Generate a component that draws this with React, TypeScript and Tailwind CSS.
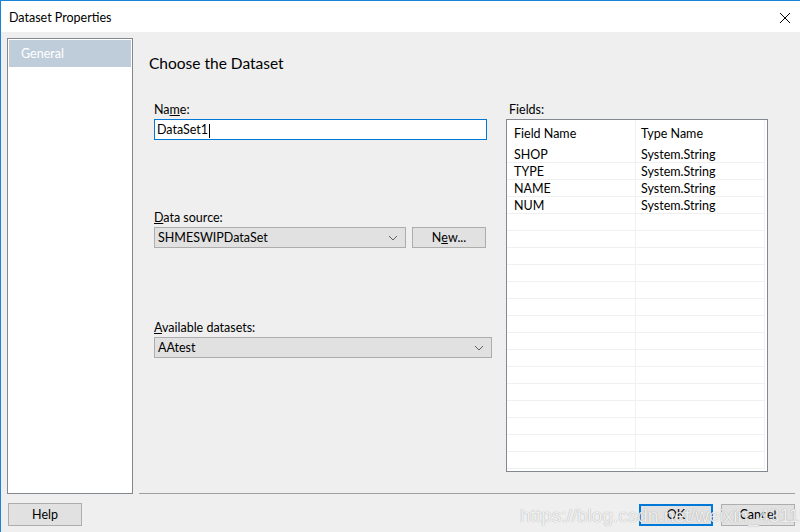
import React from "react";

const fields = [
  { name: "SHOP", type: "System.String" },
  { name: "TYPE", type: "System.String" },
  { name: "NAME", type: "System.String" },
  { name: "NUM", type: "System.String" },
];

const Chevron = () => (
  <svg width="10" height="6" viewBox="0 0 10 6" className="shrink-0">
    <path d="M1 1 L5 5 L9 1" fill="none" stroke="#606060" strokeWidth="1" />
  </svg>
);

const Combo = ({ value, width }: { value: string; width: string }) => (
  <div
    className={`${width} h-[21px] flex items-center justify-between bg-[#e1e1e1] border border-[#adadad] pl-[3px] pr-[7px]`}
  >
    <span className="pt-[2px]">{value}</span>
    <Chevron />
  </div>
);

const App = () => {
  const emptyRows = Array.from({ length: 15 });

  return (
    <div
      className="relative w-[800px] h-[532px] overflow-hidden bg-[#efefef] border-l border-t border-[#1883d7] text-[12.5px] text-black flex flex-col"
      style={{ fontFamily: 'Lato, "Noto Sans", sans-serif' }}
    >
      {/* title bar */}
      <div className="h-[31px] bg-white flex items-center justify-between pl-[8px] pr-[8px] pt-[3px] shrink-0">
        <span>Dataset Properties</span>
        <svg width="12" height="12" viewBox="0 0 12 12" className="mr-[1px]">
          <path d="M1 1 L11 11 M11 1 L1 11" stroke="#000" strokeWidth="1" />
        </svg>
      </div>

      <div className="flex-1 flex flex-col pt-[6px] pl-[6px] pr-[5px]">
        <div className="h-[456px] flex gap-[6px]">
          {/* left nav */}
          <div className="w-[126px] bg-white border border-[#828790] p-[1px]">
            <div className="h-[27px] bg-[#bfcddb] text-white flex items-center pl-[12px] pt-[2px]">
              General
            </div>
          </div>

          {/* main */}
          <div className="flex-1 border-b border-[#a0a0a0] pl-[10px] pt-[15px]">
            <div className="text-[15.5px] leading-[20px]">Choose the Dataset</div>

            <div className="flex mt-[28px]">
              <div className="w-[338px] ml-[5px] flex flex-col">
                <div className="leading-[16px] pt-[1px] mb-[1px]">
                  Na<span className="underline">m</span>e:
                </div>
                <div className="w-[333px] h-[21px] bg-white border border-[#0078d7] flex items-center pl-[2px] pt-[2px]">
                  <span>DataSet1</span>
                  <span className="w-[1px] h-[14px] bg-black ml-[1px]" />
                </div>

                <div className="leading-[16px] pt-[1px] mb-[1px] mt-[69px]">
                  <span className="underline">D</span>ata source:
                </div>
                <div className="flex gap-[6px]">
                  <Combo value="SHMESWIPDataSet" width="w-[252px]" />
                  <div className="w-[74px] h-[21px] bg-[#e1e1e1] border border-[#adadad] flex items-center justify-center pt-[2px]">
                    N<span className="underline">e</span>w...
                  </div>
                </div>

                <div className="leading-[16px] pt-[1px] mb-[1px] mt-[71px]">
                  <span className="underline">A</span>vailable datasets:
                </div>
                <Combo value="AAtest" width="w-[338px]" />
              </div>

              <div className="ml-[14px] flex flex-col">
                <div className="leading-[16px] pt-[1px] mb-[1px] pl-[3px]">Fields:</div>
                <div className="w-[262px] h-[353px] bg-white border border-[#828790] overflow-hidden">
                  <div className="flex h-[26px] mr-[2px]">
                    <div className="w-[129px] pl-[7px] pt-[2px] flex items-center border-r border-[#f0f0f0]">
                      Field Name
                    </div>
                    <div className="flex-1 pl-[5px] pt-[2px] flex items-center border-r border-[#f0f0f0]">
                      Type Name
                    </div>
                  </div>
                  {fields.map((f) => (
                    <div key={f.name} className="flex h-[17px] mr-[2px] border-b border-[#f0f0f0]">
                      <div className="w-[129px] pl-[7px] pt-[2px] flex items-center border-r border-[#f0f0f0]">
                        {f.name}
                      </div>
                      <div className="flex-1 pl-[5px] pt-[2px] flex items-center border-r border-[#f0f0f0]">
                        {f.type}
                      </div>
                    </div>
                  ))}
                  {emptyRows.map((_, i) => (
                    <div key={i} className="flex h-[17px] mr-[2px] border-b border-[#f0f0f0]">
                      <div className="w-[129px] border-r border-[#f0f0f0]" />
                      <div className="flex-1 border-r border-[#f0f0f0]" />
                    </div>
                  ))}
                </div>
              </div>
            </div>
          </div>
        </div>

        {/* buttons */}
        <div className="flex items-center justify-between mt-[9px]">
          <div className="w-[74px] h-[23px] ml-[1px] bg-[#e1e1e1] border border-[#adadad] flex items-center justify-center pt-[2px]">
            Help
          </div>
          <div className="flex gap-[8px]">
            <div className="w-[74px] h-[22px] bg-[#e1e1e1] border-2 border-[#0078d7] flex items-center justify-center pt-[2px]">
              OK
            </div>
            <div className="w-[74px] h-[22px] bg-[#e1e1e1] border border-[#adadad] flex items-center justify-center pt-[2px]">
              Cancel
            </div>
          </div>
        </div>
      </div>

      {/* watermark */}
      <div
        className="absolute left-[519px] top-[501px] text-[19px] whitespace-nowrap text-white/85 pointer-events-none"
        style={{ fontFamily: '"Liberation Sans", Arial, sans-serif', textShadow: "0 0 1px rgba(0,0,0,0.4)" }}
      >
        https://blog.csdn.net/weixin_43119143
      </div>
    </div>
  );
};

export default App;
